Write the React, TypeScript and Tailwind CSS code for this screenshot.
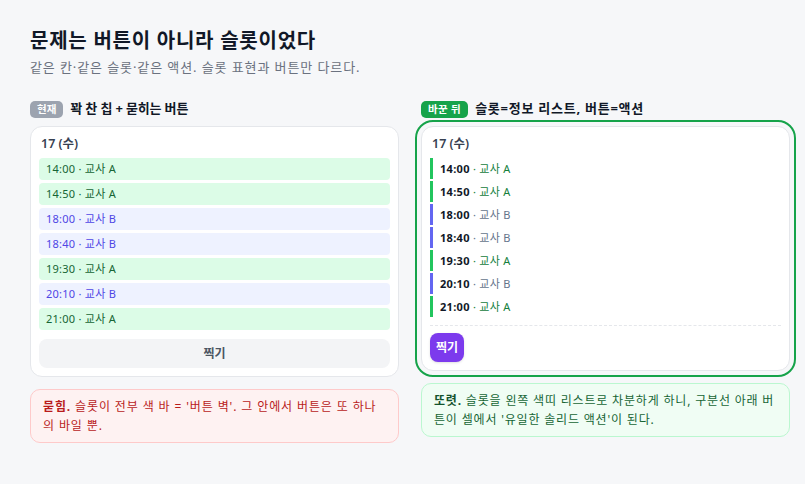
const leftSlots = [
  { time: "14:00", who: "A" },
  { time: "14:50", who: "A" },
  { time: "18:00", who: "B" },
  { time: "18:40", who: "B" },
  { time: "19:30", who: "A" },
  { time: "20:10", who: "B" },
  { time: "21:00", who: "A" },
];

export default function App() {
  return (
    <div className="min-h-[484px] bg-[#f6f7f9] pl-[30px] pr-[15px] pt-[28px] font-['Noto_Sans','Noto_Sans_CJK_KR',sans-serif]">
      <h1 className="text-[20px] leading-[26px] font-bold tracking-[0.75px] text-[#111827]">문제는 버튼이 아니라 슬롯이었다</h1>
      <p className="mt-[4px] text-[13px] leading-[18px] tracking-[0.9px] text-[#6b7280]">같은 칸·같은 슬롯·같은 액션. 슬롯 표현과 버튼만 다르다.</p>

      <div className="mt-[24px] grid grid-cols-2 gap-[22px]">
        {/* 현재 */}
        <div>
          <div className="flex h-[18px] items-center gap-[7px]">
            <span className="rounded-[5px] bg-[#9ca3af] px-[7px] text-[10.5px] leading-[17px] font-bold text-white">현재</span>
            <span className="text-[13px] font-bold tracking-[-0.15px] text-[#111827]">꽉 찬 칩 + 묻히는 버튼</span>
          </div>
          <div className="mt-[8px] rounded-[12px] border border-[#e5e7eb] bg-white p-[8px]">
            <div className="px-[2px] text-[12.5px] leading-[18px] font-semibold text-[#374151]">17 (수)</div>
            <div className="mt-[5px] flex flex-col gap-[3px]">
              {leftSlots.map((s) => (
                <div
                  key={s.time}
                  className={s.who === "A"
                    ? "h-[22px] rounded-[4px] bg-[#dcfce7] px-[7px] text-[11px] leading-[21px] tracking-[0.25px] text-[#166534]"
                    : "h-[22px] rounded-[4px] bg-[#eef2ff] px-[7px] text-[11px] leading-[21px] tracking-[0.25px] text-[#4f46e5]"}
                >
                  {s.time} · 교사 {s.who}
                </div>
              ))}
            </div>
            <button className="mt-[9px] block h-[29px] w-full rounded-[8px] bg-[#f3f4f6] pt-[1px] text-[12px] font-bold text-[#4b5563]">찍기</button>
          </div>
          <div className="mt-[12px] rounded-[10px] border border-[#fecaca] bg-[#fef2f2] px-[12px] pt-[8px] pb-[7px] text-[12px] leading-[18.6px] tracking-[0.88px] text-[#b91c1c]">
            <b>묻힘.</b> 슬롯이 전부 색 바 = '버튼 벽'. 그 안에서 버튼은 또 하나의 바일 뿐.
          </div>
        </div>

        {/* 바꾼 뒤 */}
        <div>
          <div className="flex h-[18px] items-center gap-[6px]">
            <span className="rounded-[5px] bg-[#16a34a] px-[7px] text-[10.5px] leading-[17px] font-bold tracking-[0.35px] text-white">바꾼 뒤</span>
            <span className="ml-[1px] text-[13px] font-bold tracking-[0.75px] text-[#111827]">슬롯=정보 리스트, 버튼=액션</span>
          </div>
          <div className="mt-[8px] rounded-[12px] border border-[#e5e7eb] bg-white p-[8px] outline-2 outline-offset-[4px] outline-[#16a34a]">
            <div className="px-[2px] text-[12.5px] leading-[18px] font-semibold text-[#374151]">17 (수)</div>
            <div className="mt-[5px] flex flex-col gap-[2px]">
              {leftSlots.map((s) => (
                <div
                  key={s.time}
                  className={s.who === "A"
                    ? "h-[21px] border-l-[3px] border-[#22c55e] pl-[7px] text-[11px] leading-[21px] tracking-[0.3px] text-[#15803d]"
                    : "h-[21px] border-l-[3px] border-[#6366f1] pl-[7px] text-[11px] leading-[21px] tracking-[0.3px] text-[#64748b]"}
                >
                  <b className="text-[#111827]">{s.time}</b> · 교사 {s.who}
                </div>
              ))}
            </div>
            <div className="mt-[8px] border-t border-dashed border-[#e5e7eb] pt-[7px]">
              <button className="block h-[29px] w-[34px] rounded-[8px] bg-[#7c3aed] text-[12px] font-bold text-white shadow-sm">찍기</button>
            </div>
          </div>
          <div className="mt-[12px] rounded-[10px] border border-[#bbf7d0] bg-[#f0fdf4] px-[12px] pt-[8px] pb-[7px] text-[12px] leading-[18.6px] tracking-[0.82px] text-[#166534]">
            <b className="text-[#14532d]">또렷.</b> 슬롯을 왼쪽 색띠 리스트로 차분하게 하니, 구분선 아래 버튼이 셀에서 '유일한 솔리드 액션'이 된다.
          </div>
        </div>
      </div>
    </div>
  );
}
